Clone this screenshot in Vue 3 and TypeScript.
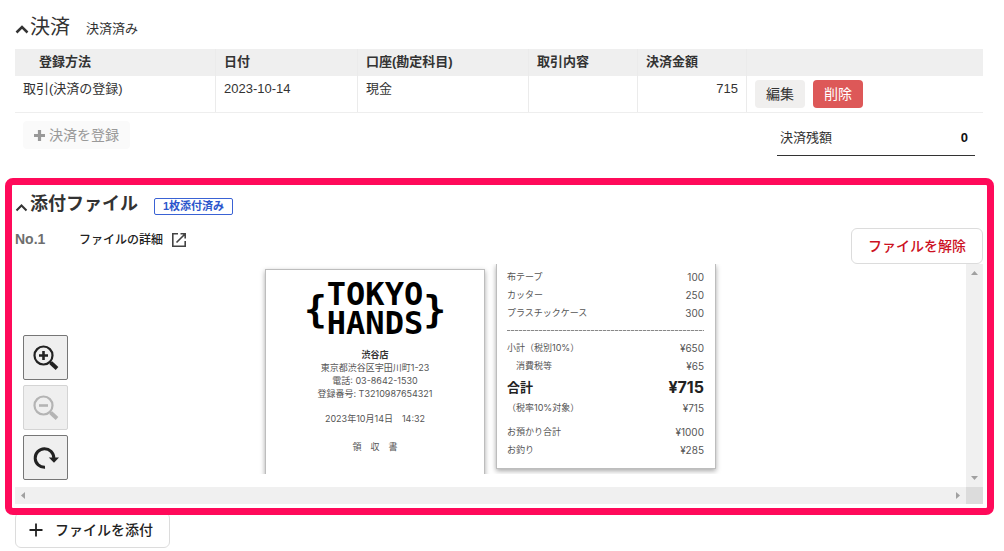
<script setup lang="ts">
interface Payment {
  method: string
  date: string
  account: string
  detail: string
  amount: string
}

interface ReceiptLine {
  label: string
  value: string
  kind?: 'rule' | 'total' | 'indent' | 'note' | 'paid'
}

const columns: string[] = ['登録方法', '日付', '口座(勘定科目)', '取引内容', '決済金額', '']

const payments: Payment[] = [
  { method: '取引(決済の登録)', date: '2023-10-14', account: '現金', detail: '', amount: '715' },
]

const receiptLines: ReceiptLine[] = [
  { label: '布テープ', value: '100' },
  { label: 'カッター', value: '250' },
  { label: 'プラスチックケース', value: '300' },
  { label: '', value: '', kind: 'rule' },
  { label: '小計（税別10%）', value: '¥650' },
  { label: '消費税等', value: '¥65', kind: 'indent' },
  { label: '合計', value: '¥715', kind: 'total' },
  { label: '（税率10%対象）', value: '¥715', kind: 'note' },
  { label: 'お預かり合計', value: '¥1000', kind: 'paid' },
  { label: 'お釣り', value: '¥285' },
]
</script>

<template>
  <main class="page">
    <section class="payments">
      <header class="heading">
        <svg class="chevron" viewBox="0 0 14 10" aria-hidden="true">
          <path d="M1.500 8.500 7 3l5.500 5.500" fill="none" stroke="currentColor" stroke-width="2.500" />
        </svg>
        <h2 class="title light">決済</h2>
        <span class="status">決済済み</span>
      </header>

      <table class="table">
        <thead>
          <tr>
            <th v-for="(column, i) in columns" :key="i" scope="col" :class="`col-${i}`">{{ column }}</th>
          </tr>
        </thead>
        <tbody>
          <tr v-for="payment in payments" :key="payment.date">
            <td>{{ payment.method }}</td>
            <td>{{ payment.date }}</td>
            <td>{{ payment.account }}</td>
            <td>{{ payment.detail }}</td>
            <td class="amount">{{ payment.amount }}</td>
            <td>
              <div class="actions">
                <button type="button" class="btn">編集</button>
                <button type="button" class="btn danger">削除</button>
              </div>
            </td>
          </tr>
        </tbody>
      </table>

      <div class="below">
        <button type="button" class="btn add" disabled>
          <svg class="plus" viewBox="0 0 11 11" aria-hidden="true">
            <path d="M5.500 0v11M0 5.500h11" stroke="currentColor" stroke-width="3.200" />
          </svg>
          決済を登録
        </button>
        <div class="balance">
          <span>決済残額</span>
          <strong>0</strong>
        </div>
      </div>
    </section>

    <section class="files">
      <header class="heading">
        <svg class="chevron thin" viewBox="0 0 14 10" aria-hidden="true">
          <path d="M1.500 8.500 6.500 3.500l5 5" fill="none" stroke="currentColor" stroke-width="2" />
        </svg>
        <h2 class="title">添付ファイル</h2>
        <span class="badge">1枚添付済み</span>
      </header>

      <div class="file-row">
        <span class="number">No.1</span>
        <a class="detail" href="#detail">
          ファイルの詳細
          <svg class="external" viewBox="0 0 16 16" aria-hidden="true">
            <path d="M7 1.800H1.800v12.400h12.400V9M9.500 1.800h4.700v4.700M14 2 5.500 10.500" fill="none" stroke="currentColor" stroke-width="1.600" />
          </svg>
        </a>
        <button type="button" class="outline remove">ファイルを解除</button>
      </div>

      <div class="viewer">
        <div class="canvas">
          <div class="receipts">
            <article class="receipt">
              <div class="logo">
                <span class="brace">{</span>
                <span class="brand">
                  <span>TOKYO</span>
                  <span>HANDS</span>
                </span>
                <span class="brace">}</span>
              </div>
              <p><b>渋谷店</b></p>
              <p>東京都渋谷区宇田川町1-23</p>
              <p>電話: 03-8642-1530</p>
              <p>登録番号: T3210987654321</p>
              <p class="spaced">2023年10月14日　14:32</p>
              <p class="spaced last">領　収　書</p>
            </article>
            <article class="receipt items">
              <div v-for="(line, i) in receiptLines" :key="i" class="line" :class="line.kind">
                <template v-if="line.kind !== 'rule'">
                  <span>{{ line.label }}</span>
                  <span class="value">{{ line.value }}</span>
                </template>
              </div>
            </article>
          </div>
          <div class="tools">
            <button type="button" aria-label="拡大">
              <svg viewBox="0 0 26 26" aria-hidden="true">
                <circle cx="10.500" cy="10.500" r="9" fill="none" stroke="currentColor" stroke-width="2.200" />
                <path d="M10.500 6v9M6 10.500h9" stroke="currentColor" stroke-width="2.600" />
                <path d="m16.500 16.500 2 2" stroke="currentColor" stroke-width="2.400" />
                <path d="m17.800 17.800 6.200 5.700" stroke="currentColor" stroke-width="4" />
              </svg>
            </button>
            <button type="button" aria-label="縮小" disabled>
              <svg viewBox="0 0 26 26" aria-hidden="true">
                <circle cx="10.500" cy="10.500" r="9" fill="none" stroke="currentColor" stroke-width="2.200" />
                <path d="M6 10.500h9" stroke="currentColor" stroke-width="2.600" />
                <path d="m16.500 16.500 2 2" stroke="currentColor" stroke-width="2.400" />
                <path d="m17.800 17.800 6.200 5.700" stroke="currentColor" stroke-width="4" />
              </svg>
            </button>
            <button type="button" aria-label="回転">
              <svg viewBox="0 0 26 26" aria-hidden="true">
                <path d="M12 22.300A9.300 9.300 0 1 1 20.800 13" fill="none" stroke="currentColor" stroke-width="3" />
                <path d="M15.800 12.500H26l-5 5.200z" fill="currentColor" />
              </svg>
            </button>
          </div>
        </div>
        <div class="bar vertical" aria-hidden="true">
          <svg viewBox="0 0 17 17"><path d="M5 11h7L8.500 7z" fill="#a0a0a0" /></svg>
          <svg viewBox="0 0 17 17"><path d="M5 6h7l-3.500 4z" fill="#a0a0a0" /></svg>
        </div>
        <div class="bar" aria-hidden="true">
          <svg viewBox="0 0 17 17"><path d="M10 5v7L6 8.500z" fill="#a0a0a0" /></svg>
          <svg viewBox="0 0 17 17"><path d="M7 5v7l4-3.500z" fill="#a0a0a0" /></svg>
        </div>
        <div class="corner"></div>
      </div>
      <div class="frame" aria-hidden="true"></div>
    </section>

    <button type="button" class="outline attach">
      <svg viewBox="0 0 14 14" aria-hidden="true">
        <path d="M7 .5v13M.5 7h13" stroke="currentColor" stroke-width="1.800" />
      </svg>
      ファイルを添付
    </button>
  </main>
</template>

<style>
body {
  background: #fff;
}
</style>

<style scoped>
* {
  box-sizing: border-box;
}

.page {
  padding: 12px 21px 0 15px;
  color: #333;
  font: 13px/18px "Liberation Sans", "Noto Sans CJK JP", sans-serif;
}

button {
  font: inherit;
  color: inherit;
  cursor: pointer;
}

.heading {
  display: flex;
  align-items: center;
}

.payments .heading {
  height: 29px;
}

.chevron {
  width: 14px;
  height: 10px;
  margin: 4px 1px 0 0;
  color: #333;
}

.title {
  margin: 0;
  font-size: 18px;
  line-height: 28px;
  font-weight: 700;
}

.title.light {
  font-size: 20px;
  font-weight: 400;
}

.status {
  margin: 4px 0 0 16px;
}

.table {
  width: 100%;
  margin-top: 8px;
  border-collapse: separate;
  border-spacing: 0;
  table-layout: fixed;
  border-bottom: 1px solid #eee;
}

th,
td {
  padding: 4px 8px;
  text-align: left;
  vertical-align: top;
  border-right: 1px solid #ebebeb;
}

th {
  height: 27px;
  background: #efefef;
}

td {
  height: 36px;
}

th:last-child,
td:last-child {
  border-right: 0;
}

.col-0 {
  width: 201px;
  padding-left: 24px;
}

.col-1 {
  width: 142px;
}

.col-2 {
  width: 171px;
}

.col-3,
.col-4 {
  width: 109px;
}

.amount {
  text-align: right;
}

.actions {
  display: flex;
  gap: 8px;
}

.btn {
  height: 28px;
  padding: 0 11px;
  border: 0;
  border-radius: 4px;
  background: #f0efee;
  font-size: 14px;
}

.btn.danger {
  background: #dd5858;
  color: #fff;
}

.btn.add {
  display: flex;
  align-items: center;
  gap: 4px;
  background: #fafafa;
  color: #999;
}

.plus {
  width: 11px;
  height: 11px;
}

.below {
  display: flex;
  justify-content: space-between;
  padding: 8px 8px 0;
}

.balance {
  display: flex;
  justify-content: space-between;
  width: 198px;
  height: 35px;
  padding: 8px 7px 0 3px;
  border-bottom: 1px solid #333;
}

.balance strong {
  color: #111;
}

.files {
  position: relative;
  padding-top: 34px;
}

.frame {
  position: absolute;
  inset: 22px -11px -11px -10px;
  border: 7px solid #ff0a5a;
  border-radius: 8px;
  pointer-events: none;
}

.thin {
  margin-top: 6px;
}

.badge {
  margin: 5px 0 0 16px;
  padding: 0 8px;
  border: 1px solid #3a62d4;
  border-radius: 2px;
  color: #2c56cc;
  font-size: 11px;
  line-height: 15px;
  font-weight: 700;
}

.file-row {
  display: flex;
  align-items: flex-start;
  margin-top: 10px;
}

.number {
  width: 64px;
  padding-top: 2px;
  color: #6e6e6e;
  font-size: 14px;
  font-weight: 700;
}

.detail {
  display: flex;
  align-items: center;
  gap: 8px;
  padding-top: 3px;
  color: #222;
  font-size: 12px;
  font-weight: 500;
  text-decoration: none;
}

.external {
  width: 16px;
  height: 16px;
  color: #444;
}

.outline {
  height: 36px;
  padding: 0 16px;
  border: 1px solid #dcdcdc;
  border-radius: 6px;
  background: #fff;
  font-size: 14px;
  font-weight: 500;
}

.remove {
  margin-left: auto;
  color: #cc1022;
}

.viewer {
  display: grid;
  grid-template-columns: 1fr 17px;
  grid-template-rows: auto 17px;
}

.canvas {
  position: relative;
  padding-bottom: 13px;
}

.receipts {
  display: flex;
  justify-content: center;
  gap: 11px;
  height: 210px;
  overflow: hidden;
}

.receipt {
  width: 220px;
  height: 300px;
  margin-top: 5px;
  padding: 10px;
  border: 1px solid #bdbdbd;
  background: #fff;
  box-shadow: 0 2px 5px rgba(0, 0, 0, 0.35);
  color: #555;
  font: 9px/13px Inter, "Noto Sans CJK JP", sans-serif;
  text-align: center;
}

.receipt p {
  margin: 0;
}

.receipt b {
  color: #333;
}

.receipt .spaced {
  margin-top: 12px;
}

.receipt .last {
  margin-top: 15px;
}

.logo {
  display: flex;
  justify-content: center;
  align-items: center;
  height: 58px;
  margin-bottom: 10px;
  color: #000;
  font: 700 32px/29px "DejaVu Sans Mono", monospace;
}

.brand {
  display: grid;
}

.brace {
  font-size: 38px;
}

.receipt.items {
  height: 205px;
  margin-top: 0;
  padding: 4px 11px 0 10px;
  border-top: 0;
}

.line {
  display: flex;
  justify-content: space-between;
  line-height: 18px;
}

.value {
  font-size: 10px;
}

.line.rule {
  height: 1px;
  margin: 8px 0;
  background: repeating-linear-gradient(90deg, #888 0 3px, #ddd 3px 4px);
}

.line.indent {
  padding-left: 9px;
}

.line.total {
  color: #222;
  font-size: 13px;
  line-height: 24px;
  font-weight: 700;
}

.total .value {
  font-size: 16px;
}

.line.paid {
  margin-top: 6px;
}

.tools {
  position: absolute;
  left: 8px;
  bottom: 7px;
  display: grid;
  gap: 5px;
}

.tools button {
  display: grid;
  place-items: center;
  width: 45px;
  height: 45px;
  padding: 0;
  border: 1px solid #767676;
  border-radius: 2px;
  background: #efefef;
  color: #222;
}

.tools button:disabled {
  border-color: #d4d4d4;
  color: #b4b4b4;
}

.tools svg {
  width: 26px;
  height: 26px;
}

.bar {
  display: flex;
  justify-content: space-between;
  background: #f0f0f0;
}

.bar.vertical {
  flex-direction: column;
}

.bar svg {
  width: 17px;
  height: 17px;
}

.corner {
  background: #dcdcdc;
}

.attach {
  display: flex;
  align-items: center;
  gap: 12px;
  margin-top: 8px;
  padding-left: 13px;
  color: #222;
}

.attach svg {
  width: 14px;
  height: 14px;
}
</style>
